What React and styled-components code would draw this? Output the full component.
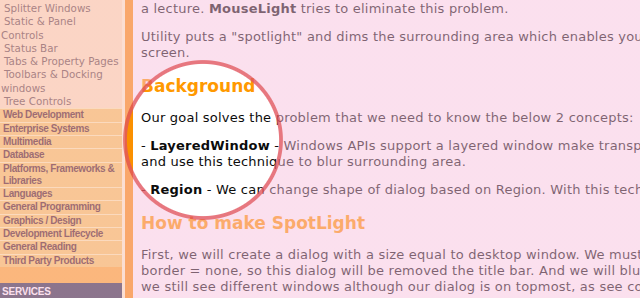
import React from "react";
import styled, { createGlobalStyle } from "styled-components";

const GlobalStyle = createGlobalStyle`
  html, body {
    margin: 0;
    padding: 0;
    overflow: hidden;
    background: #ffffff;
  }
`;

const topItems = [
  "Splitter Windows",
  "Static & Panel\nControls",
  "Status Bar",
  "Tabs & Property Pages",
  "Toolbars & Docking windows",
  "Tree Controls",
];

const categories = [
  "Web Development",
  "Enterprise Systems",
  "Multimedia",
  "Database",
  "Platforms, Frameworks & Libraries",
  "Languages",
  "General Programming",
  "Graphics / Design",
  "Development Lifecycle",
  "General Reading",
  "Third Party Products",
];

const App = () => {
  return (
    <>
      <GlobalStyle />
      <Page>
        <Sidebar>
          <ItemList>
            {topItems.map((item) => (
              <Item key={item}>{item}</Item>
            ))}
          </ItemList>
          <CategoryList>
            {categories.map((cat) => (
              <Category key={cat}>{cat}</Category>
            ))}
          </CategoryList>
          <Band />
          <SectionHead>SERVICES</SectionHead>
        </Sidebar>
        <Strip />
        <Main>
          <Para>
            a lecture. <b>MouseLight</b> tries to eliminate this problem.
          </Para>
          <Para>
            Utility puts a "spotlight" and dims the surrounding area which
            enables you to focus on a part of the
            <br />
            screen.
          </Para>
          <Heading>Background</Heading>
          <Para>
            Our goal solves the problem that we need to know the below 2
            concepts:
          </Para>
          <Para>
            - <b>LayeredWindow</b> - Windows APIs support a layered window make
            transparent effects
            <br />
            and use this technique to blur surrounding area.
          </Para>
          <Para>
            - <b>Region</b> - We can change shape of dialog based on Region.
            With this technique we cut a hole.
          </Para>
          <Heading>How to make SpotLight</Heading>
          <Para>
            First, we will create a dialog with a size equal to desktop window.
            We must set the
            <br />
            border = none, so this dialog will be removed the title bar. And we
            will blur it so that
            <br />
            we still see different windows although our dialog is on topmost,
            as see code below.
          </Para>
        </Main>
      </Page>
      <Spotlight $x={203} $y={140} $r={78} />
    </>
  );
};

const Page = styled.div`
  display: flex;
  width: 900px;
  height: 298px;
  overflow: hidden;
`;

const Sidebar = styled.div`
  width: 122px;
  flex: none;
  display: flex;
  flex-direction: column;
  border-right: 3px solid #fffbc8;
  background: #ffe9af;
`;

const ItemList = styled.div`
  padding: 2px 0 0 1px;
`;

const Item = styled.div`
  font-family: "DejaVu Sans", Verdana, sans-serif;
  font-size: 10.3px;
  line-height: 13.3px;
  color: #5e4a32;
  text-indent: 3px;
  white-space: pre-line;
`;

const CategoryList = styled.div`
  background: #f9cc54;
`;

const Category = styled.div`
  font-family: "Liberation Sans", Arial, sans-serif;
  font-weight: bold;
  font-size: 10px;
  letter-spacing: -0.4px;
  line-height: 12.3px;
  color: #4a1c10;
  padding-left: 3px;
  border-top: 1px solid #fff3a1;
`;

const Band = styled.div`
  height: 16px;
  background: #ffaf23;
`;

const SectionHead = styled.div`
  flex: 1;
  background: #272f42;
  color: #ffffff;
  font-family: "Liberation Sans", Arial, sans-serif;
  font-weight: bold;
  font-size: 10px;
  letter-spacing: -0.2px;
  padding: 3px 0 0 2px;
`;

const Strip = styled.div`
  width: 8px;
  flex: none;
  background: #fb9000;
`;

const Main = styled.div`
  flex: 1;
  padding: 1px 0 0 8px;
  background: #ffffff;
  white-space: nowrap;
  overflow: hidden;
`;

const Para = styled.p`
  font-family: "DejaVu Sans", Verdana, sans-serif;
  font-size: 13px;
  letter-spacing: 0.22px;
  line-height: 16px;
  color: #0c0c0c;
  margin: 12px 0;

  &:first-child {
    margin-top: 0;
  }
`;

const Heading = styled.h2`
  font-family: "DejaVu Sans", Verdana, sans-serif;
  font-size: 17px;
  line-height: 20px;
  font-weight: bold;
  color: #ff9900;
  margin: 15px 0 14px;
`;

const Spotlight = styled.div`
  position: fixed;
  inset: 0;
  pointer-events: none;
  background: radial-gradient(
    circle at ${({ $x }) => $x}px ${({ $y }) => $y}px,
    transparent ${({ $r }) => $r - 2.4}px,
    rgba(225, 85, 95, 0.8) ${({ $r }) => $r - 1.4}px,
    rgba(225, 85, 95, 0.8) ${({ $r }) => $r + 1.4}px,
    rgba(247, 191, 220, 0.486) ${({ $r }) => $r + 2.4}px
  );
`;

export default App;
